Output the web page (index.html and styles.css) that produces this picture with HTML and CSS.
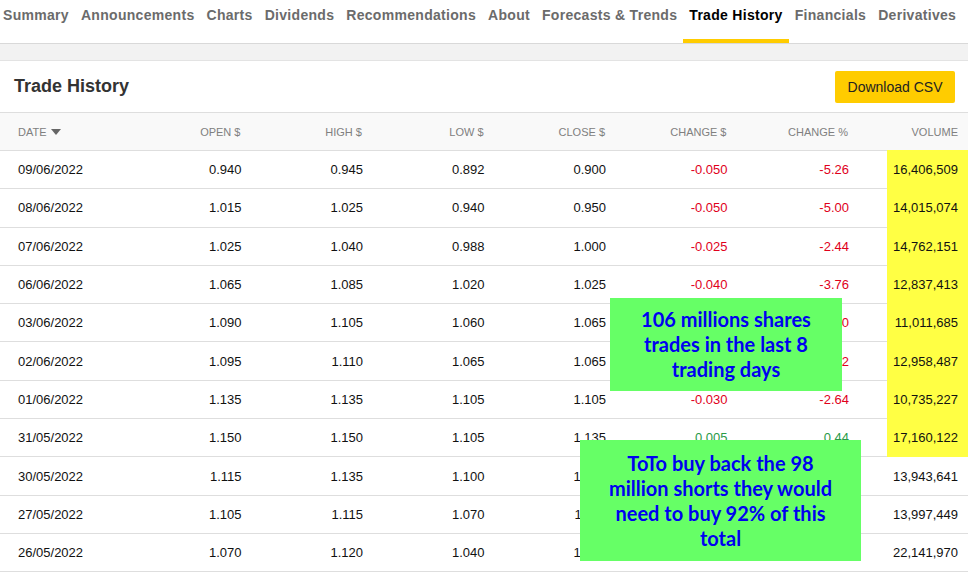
FILE: index.html
```html
<!DOCTYPE html>
<html>
<head>
<meta charset="utf-8">
<link rel="stylesheet" href="styles.css">
</head>
<body>
<div class="page">
  <nav class="tabs">
    <a class="tab">Summary</a>
    <a class="tab">Announcements</a>
    <a class="tab">Charts</a>
    <a class="tab">Dividends</a>
    <a class="tab">Recommendations</a>
    <a class="tab">About</a>
    <a class="tab">Forecasts &amp; Trends</a>
    <a class="tab active">Trade History</a>
    <a class="tab">Financials</a>
    <a class="tab">Derivatives</a>
  </nav>
  <div class="band"></div>
  <section class="card">
    <header class="card-head">
      <h2 class="title">Trade History</h2>
      <button class="btn">Download CSV</button>
    </header>
    <table class="grid">
      <colgroup>
        <col class="c-date"><col class="c-num"><col class="c-num"><col class="c-num"><col class="c-num"><col class="c-num"><col class="c-num"><col class="c-vol">
      </colgroup>
      <thead>
        <tr>
          <th class="left">DATE <span class="caret"></span></th>
          <th>OPEN $</th><th>HIGH $</th><th>LOW $</th><th>CLOSE $</th><th>CHANGE $</th><th>CHANGE %</th><th>VOLUME</th>
        </tr>
      </thead>
      <tbody>
        <tr><td class="left">09/06/2022</td><td>0.940</td><td>0.945</td><td>0.892</td><td>0.900</td><td class="neg">-0.050</td><td class="neg">-5.26</td><td><span class="v">16,406,509</span></td></tr>
        <tr><td class="left">08/06/2022</td><td>1.015</td><td>1.025</td><td>0.940</td><td>0.950</td><td class="neg">-0.050</td><td class="neg">-5.00</td><td><span class="v">14,015,074</span></td></tr>
        <tr><td class="left">07/06/2022</td><td>1.025</td><td>1.040</td><td>0.988</td><td>1.000</td><td class="neg">-0.025</td><td class="neg">-2.44</td><td><span class="v">14,762,151</span></td></tr>
        <tr><td class="left">06/06/2022</td><td>1.065</td><td>1.085</td><td>1.020</td><td>1.025</td><td class="neg">-0.040</td><td class="neg">-3.76</td><td><span class="v">12,837,413</span></td></tr>
        <tr><td class="left">03/06/2022</td><td>1.090</td><td>1.105</td><td>1.060</td><td>1.065</td><td class="neg">-0.025</td><td class="neg">-2.30</td><td><span class="v">11,011,685</span></td></tr>
        <tr><td class="left">02/06/2022</td><td>1.095</td><td>1.110</td><td>1.065</td><td>1.065</td><td class="neg">-0.030</td><td class="neg">-2.72</td><td><span class="v">12,958,487</span></td></tr>
        <tr><td class="left">01/06/2022</td><td>1.135</td><td>1.135</td><td>1.105</td><td>1.105</td><td class="neg">-0.030</td><td class="neg">-2.64</td><td><span class="v">10,735,227</span></td></tr>
        <tr><td class="left">31/05/2022</td><td>1.150</td><td>1.150</td><td>1.105</td><td>1.135</td><td class="pos">0.005</td><td class="pos">0.44</td><td><span class="v">17,160,122</span></td></tr>
        <tr><td class="left">30/05/2022</td><td>1.115</td><td>1.135</td><td>1.100</td><td>1.130</td><td class="pos">0.015</td><td class="pos">1.35</td><td><span class="v">13,943,641</span></td></tr>
        <tr><td class="left">27/05/2022</td><td>1.105</td><td>1.115</td><td>1.070</td><td>1.115</td><td class="pos">0.010</td><td class="pos">0.90</td><td><span class="v">13,997,449</span></td></tr>
        <tr><td class="left">26/05/2022</td><td>1.070</td><td>1.120</td><td>1.040</td><td>1.105</td><td class="pos">0.035</td><td class="pos">3.27</td><td><span class="v">22,141,970</span></td></tr>
      </tbody>
    </table>
  </section>
  <div class="hl"></div>
  <div class="note note-a">106 millions shares trades in the last 8 trading days</div>
  <div class="note note-b">ToTo buy back the 98 million shorts they would need to buy 92% of this total</div>
</div>
</body>
</html>
```
FILE: styles.css
```css
html, body { margin: 0; padding: 0; background: #fff; }
body { font-family: "Liberation Sans", Arial, sans-serif; width: 968px; height: 574px; overflow: hidden; }
.page { position: relative; }

.tabs { display: flex; height: 43px; border-bottom: 1px solid #d9d9d9; margin-left: -3px; background: #fff; }
.tab { box-sizing: border-box; height: 43px; padding: 6px 6px 0; font-size: 14px; line-height: 18px; font-weight: bold; letter-spacing: 0.3px; color: #6b6b6b; white-space: nowrap; }
.tab.active { color: #000; border-bottom: 4px solid #ffcc00; }

.band { height: 16px; background: #f2f2f2; border-bottom: 1px solid #e3e3e3; }

.card { background: #fff; }
.card-head { display: flex; align-items: center; justify-content: space-between; height: 51px; padding: 0 13px 0 14px; }
.title { margin: 0; font-size: 18px; font-weight: bold; color: #333; }
.btn { width: 120px; height: 32px; border: 0; border-radius: 2px; background: #ffcc00; font-family: "Liberation Sans", Arial, sans-serif; font-size: 14px; color: #222; padding: 0; }

.grid { width: 968px; border-collapse: collapse; table-layout: fixed; }
.c-date { width: 130px; }
.c-num { width: 121.5px; }
.c-vol { width: 109px; }
.grid th { height: 37px; background: #f9f9f9; border-top: 1px solid #dedede; border-bottom: 1px solid #dedede; font-size: 11px; font-weight: normal; color: #808080; text-align: right; padding: 0 11px 0 0; }
.grid th:last-child { padding-right: 10px; }
.grid td { height: 37.3px; border-bottom: 1px solid #dedede; font-size: 13px; color: #111; text-align: right; padding: 0 10px 0 0; }
.grid .left { text-align: left; padding-left: 18px; }
.caret { display: inline-block; width: 0; height: 0; border-left: 5px solid transparent; border-right: 5px solid transparent; border-top: 6px solid #666; margin-left: 1px; vertical-align: 1px; }
.neg { color: #e0001b !important; }
.pos { color: #2a9a48 !important; }
.v { position: relative; z-index: 2; }

.hl { position: absolute; left: 887px; top: 150px; width: 81px; height: 307px; background: #ffff44; z-index: 1; }

.note { position: absolute; z-index: 3; box-sizing: border-box; background: #66ff66; color: #0000f0; font-family: Lato, "Open Sans", sans-serif; font-weight: bold; font-size: 20px; line-height: 25px; text-align: center; display: flex; align-items: center; justify-content: center; }
.note-a { left: 610px; top: 298px; width: 232px; height: 93px; padding: 0 18px; }
.note-b { left: 580px; top: 440px; width: 281px; height: 121px; padding: 0 16px; }
```
